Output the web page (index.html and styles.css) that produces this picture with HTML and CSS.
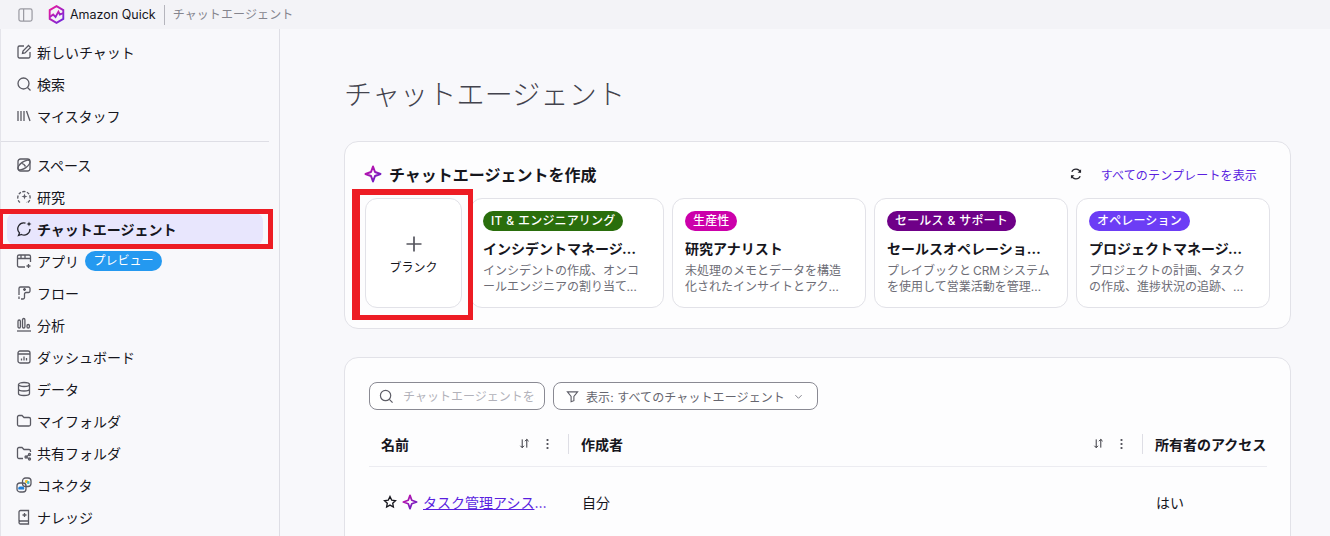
FILE: index.html
```html
<!DOCTYPE html>
<html lang="ja">

<head>
    <meta charset="UTF-8">
    <meta name="viewport" content="width=device-width, initial-scale=1.0">
    <title>チャットエージェント</title>
    <link rel="stylesheet" href="styles.css">
</head>

<body>
    <svg class="defs" width="0" height="0">
        <defs>
            <linearGradient id="spark" x1="0" y1="0" x2="1" y2="1">
                <stop offset="0" stop-color="#d010a8" />
                <stop offset="1" stop-color="#5a20c8" />
            </linearGradient>
            <linearGradient id="logo" x1="0" y1="0" x2="1" y2="1">
                <stop offset="0" stop-color="#f0189a" />
                <stop offset="1" stop-color="#6a28e0" />
            </linearGradient>
        </defs>
    </svg>

    <header class="topbar">
        <svg class="panel-icon" viewBox="0 0 16 16">
            <rect x="1" y="1.5" width="14" height="13" rx="2" />
            <path d="M6 1.5v13" />
        </svg>
        <svg class="logo" viewBox="0 0 18 20">
            <path d="M9 1.2l7.2 4.2v9.2L9 18.8l-7.2-4.2V5.400z" />
            <path d="M2 12.500l3.500-2.500 2.500 2.500 3-5.500 1.500 3 3.500-1.500" />
        </svg>
        <span class="brand">Amazon Quick</span>
        <span class="crumb">チャットエージェント</span>
    </header>

    <div class="layout">
        <nav class="sidebar">
            <a class="nav-item">
                <svg class="icon" viewBox="0 0 16 16">
                    <path d="M8 2H3.500A1.500 1.500 0 0 0 2 3.500v9A1.500 1.500 0 0 0 3.500 14h9a1.500 1.500 0 0 0 1.500-1.500V8" />
                    <path d="M6.500 9.500l.5-2.500 5.500-5.500 2 2L9 9z" />
                </svg>
                新しいチャット
            </a>
            <a class="nav-item">
                <svg class="icon" viewBox="0 0 16 16">
                    <circle cx="7.500" cy="7.500" r="5.500" />
                    <path d="M11.500 11.500l3 3" />
                </svg>
                検索
            </a>
            <a class="nav-item">
                <svg class="icon" viewBox="0 0 16 16">
                    <path d="M2 3v10M5 3v10M8 3v10M10.500 3l3.500 10" />
                </svg>
                マイスタッフ
            </a>
            <hr class="nav-divider">
            <a class="nav-item">
                <svg class="icon" viewBox="0 0 16 16">
                    <rect x="2" y="2" width="12" height="12" rx="2.500" />
                    <ellipse cx="8" cy="8" rx="7" ry="3.200" transform="rotate(-35 8 8)" />
                    <path d="M6 6.500l2 1 1.500 2" />
                </svg>
                スペース
            </a>
            <a class="nav-item">
                <svg class="icon" viewBox="0 0 16 16">
                    <path d="M4 13.500a6.200 6.200 0 1 1 7.500.3l-.8-.8" stroke-dasharray="3 1.400" />
                    <path class="icon-fill" d="M8.500 4.500l.8 2.200 2.200.8-2.200.8-.8 2.200-.8-2.200-2.200-.8 2.200-.8z" />
                </svg>
                研究
            </a>
            <a class="nav-item active">
                <svg class="icon dark" viewBox="0 0 16 16">
                    <path d="M9.500 2.100A6 6 0 0 0 3.500 12L2.500 14.500 5.500 13.500A6 6 0 0 0 14 8" />
                    <path class="icon-fill" d="M13 .5l.7 1.800 1.800.7-1.800.7-.7 1.800-.7-1.800-1.800-.7 1.800-.7z" />
                </svg>
                チャットエージェント
            </a>
            <a class="nav-item">
                <svg class="icon" viewBox="0 0 16 16">
                    <path d="M9 14H3a1.500 1.500 0 0 1-1.500-1.500v-9A1.500 1.500 0 0 1 3 2h10a1.500 1.500 0 0 1 1.500 1.500V9" />
                    <path d="M1.500 5.500h13M5 2v3.500M9 2v3.500M12.500 11v4M10.500 13h4" />
                </svg>
                アプリ
                <span class="preview">プレビュー</span>
            </a>
            <a class="nav-item">
                <svg class="icon" viewBox="0 0 16 16">
                    <path d="M3 10V3.500A1.500 1.500 0 0 1 4.500 2h8A1.500 1.500 0 0 1 14 3.500V6a1.500 1.500 0 0 1-1.500 1.500H10a1.500 1.500 0 0 0-1.500 1.500v3.500A1.500 1.500 0 0 1 7 14H5" />
                    <path d="M8.500 3v3M7 4.500h3M3 11.500v2.500" />
                </svg>
                フロー
            </a>
            <a class="nav-item">
                <svg class="icon" viewBox="0 0 16 16">
                    <rect x="2" y="3" width="2.400" height="8" rx="1.200" />
                    <rect x="6.500" y="1.500" width="2.400" height="9.500" rx="1.200" />
                    <rect x="11" y="7.500" width="2.400" height="3.500" rx="1.200" />
                    <path d="M1 14h14" />
                </svg>
                分析
            </a>
            <a class="nav-item">
                <svg class="icon" viewBox="0 0 16 16">
                    <rect x="2" y="2" width="12" height="12" rx="2" />
                    <path d="M2 5h12M5.500 11.500V9.500M8 11.500V7.500M10.500 11.500V9" />
                </svg>
                ダッシュボード
            </a>
            <a class="nav-item">
                <svg class="icon" viewBox="0 0 16 16">
                    <ellipse cx="8" cy="3.500" rx="5.500" ry="2" />
                    <path d="M2.500 3.500v9c0 1.100 2.500 2 5.500 2s5.500-.9 5.500-2v-9M2.500 8c0 1.100 2.500 2 5.500 2s5.500-.9 5.500-2" />
                </svg>
                データ
            </a>
            <a class="nav-item">
                <svg class="icon" viewBox="0 0 16 16">
                    <path d="M1.500 4a1.500 1.500 0 0 1 1.500-1.500h3l2 2h5a1.500 1.500 0 0 1 1.500 1.500v5.500a1.500 1.500 0 0 1-1.500 1.500H3a1.500 1.500 0 0 1-1.500-1.500z" />
                </svg>
                マイフォルダ
            </a>
            <a class="nav-item">
                <svg class="icon" viewBox="0 0 16 16">
                    <path d="M7 13.500H3A1.500 1.500 0 0 1 1.500 12V4A1.500 1.500 0 0 1 3 2.500h3l2 2h5A1.500 1.500 0 0 1 14.500 6v1" />
                    <circle cx="13.500" cy="9.500" r="1" />
                    <circle cx="13.500" cy="14" r="1" />
                    <circle cx="10" cy="12" r="1" />
                    <path d="M11 11.500l1.600-1.400M11 12.500l1.600 1" />
                </svg>
                共有フォルダ
            </a>
            <a class="nav-item">
                <svg class="icon" viewBox="0 0 16 16">
                    <rect x="1" y="6" width="9" height="9" rx="3" />
                    <rect x="6.500" y="1" width="8.500" height="8.500" rx="3" />
                    <rect class="conn-yellow" x="9" y="3" width="3" height="3" rx="1" />
                    <rect class="conn-teal" x="11" y="4" width="2.500" height="3" rx="1" />
                    <path class="conn-blue" d="M2.500 12.500a2 2 0 0 1 2-3h2a2 2 0 0 1 1.500 3z" />
                </svg>
                コネクタ
            </a>
            <a class="nav-item">
                <svg class="icon" viewBox="0 0 16 16">
                    <path d="M3 12.500V3a1.500 1.500 0 0 1 1.500-1.500h8V15H4.500A1.500 1.500 0 0 1 3 13.500 1.500 1.500 0 0 1 4.500 12h8" />
                    <path d="M8.500 4v4M6.500 6h4" />
                </svg>
                ナレッジ
            </a>
        </nav>

        <main class="content">
            <h1 class="page-title">チャットエージェント</h1>

            <section class="panel create-panel">
                <div class="create-head">
                    <svg class="spark" viewBox="0 0 18 18">
                        <path d="M9 1.500L11 7l5.500 2L11 11l-2 5.500L7 11 1.500 9 7 7z" />
                    </svg>
                    <h2 class="create-title">チャットエージェントを作成</h2>
                    <svg class="refresh" viewBox="0 0 16 16">
                        <path d="M13 6A5.300 5.300 0 0 0 3.200 5.500M3 10a5.300 5.300 0 0 0 9.800.5" />
                        <path class="icon-fill" d="M13.800 2.500V6.500H9.800zM2.200 13.500V9.500h4z" />
                    </svg>
                    <a class="all-link">すべてのテンプレートを表示</a>
                </div>
                <div class="cards">
                    <div class="card blank">
                        <svg class="plus" viewBox="0 0 16 16">
                            <path d="M8 0.500v15M0.500 8h15" />
                        </svg>
                        <span>ブランク</span>
                    </div>
                    <div class="card">
                        <span class="tag green">IT &amp; エンジニアリング</span>
                        <div class="card-title">インシデントマネージャー</div>
                        <p class="card-desc">インシデントの作成、オンコールエンジニアの割り当て、対応状況の追跡を行います</p>
                    </div>
                    <div class="card">
                        <span class="tag pink">生産性</span>
                        <div class="card-title">研究アナリスト</div>
                        <p class="card-desc">未処理のメモとデータを構造化されたインサイトとアクションに変換します</p>
                    </div>
                    <div class="card">
                        <span class="tag purple">セールス &amp; サポート</span>
                        <div class="card-title">セールスオペレーションアシスタント</div>
                        <p class="card-desc">プレイブックと CRM システムを使用して営業活動を管理します。詳細はこちら</p>
                    </div>
                    <div class="card">
                        <span class="tag violet">オペレーション</span>
                        <div class="card-title">プロジェクトマネージャー</div>
                        <p class="card-desc">プロジェクトの計画、タスクの作成、進捗状況の追跡、関係者への報告を行います</p>
                    </div>
                </div>
            </section>

            <section class="panel list-panel">
                <div class="toolbar">
                    <label class="search">
                        <svg class="search-icon" viewBox="0 0 16 16">
                            <circle cx="7" cy="7" r="5.500" />
                            <path d="M11 11l3.500 3.500" />
                        </svg>
                        <input type="text" placeholder="チャットエージェントを検索">
                    </label>
                    <button class="filter">
                        <svg class="filter-icon" viewBox="0 0 14 14">
                            <path d="M1.500 2h11L8.500 7v4.500l-3 1.200V7z" />
                        </svg>
                        表示: すべてのチャットエージェント
                        <svg class="chevron" viewBox="0 0 10 10">
                            <path d="M1.500 3.500L5 7l3.500-3.500" />
                        </svg>
                    </button>
                </div>
                <div class="table">
                    <div class="table-head">
                        <div class="th">
                            <span class="th-label">名前</span>
                            <svg class="sort" viewBox="0 0 12 12">
                                <path d="M3.500 1.500v9M1.500 8.500l2 2 2-2M8.500 10.500v-9M6.500 3.500l2-2 2 2" />
                            </svg>
                            <span class="dots"></span>
                        </div>
                        <div class="th">
                            <span class="th-label">作成者</span>
                            <svg class="sort" viewBox="0 0 12 12">
                                <path d="M3.500 1.500v9M1.500 8.500l2 2 2-2M8.500 10.500v-9M6.500 3.500l2-2 2 2" />
                            </svg>
                            <span class="dots"></span>
                        </div>
                        <div class="th">
                            <span class="th-label">所有者のアクセス</span>
                        </div>
                    </div>
                    <div class="table-row">
                        <div class="td name-cell">
                            <svg class="star" viewBox="0 0 14 14">
                                <path d="M7 1.500l1.700 3.600 3.800.5-2.800 2.600.7 3.800L7 10.100 3.600 12l.7-3.800L1.500 5.600l3.800-.5z" />
                            </svg>
                            <svg class="spark small" viewBox="0 0 18 18">
                                <path d="M9 1.500L11 7l5.500 2L11 11l-2 5.500L7 11 1.500 9 7 7z" />
                            </svg>
                            <a class="agent-link">タスク管理アシスタント</a>
                        </div>
                        <div class="td">自分</div>
                        <div class="td">はい</div>
                    </div>
                </div>
            </section>
        </main>
    </div>

    <!-- red annotation boxes drawn over the screenshot -->
    <div class="mark mark-nav"></div>
    <div class="mark mark-blank"></div>
</body>

</html>
```

FILE: styles.css
```css
* {
    box-sizing: border-box;
}

html,
body {
    height: 536px;
    margin: 0;
    overflow: hidden;
}

body {
    background: #f8f8fb;
    color: #16161d;
    font-family: Inter, 'Noto Sans CJK JP', sans-serif;
    font-size: 14px;
    position: relative;
}

.defs {
    position: absolute;
}

/* top bar */
.topbar {
    align-items: center;
    background: #f3f3f7;
    display: flex;
    height: 29px;
    padding-left: 18px;
}

.panel-icon {
    fill: none;
    height: 16px;
    stroke: #9a9aa2;
    stroke-width: 1.3;
    width: 15px;
}

.logo {
    fill: none;
    height: 19px;
    margin-left: 15px;
    stroke: url(#logo);
    stroke-width: 2;
    width: 17px;
}

.brand {
    font-size: 12.5px;
    margin-left: 5px;
}

.crumb {
    border-left: 1px solid #b5b5bd;
    color: #85858e;
    font-size: 12px;
    letter-spacing: .1px;
    line-height: 20px;
    margin-left: 8px;
    padding-left: 8px;
}

.layout {
    display: flex;
    height: 507px;
}

/* sidebar */
.sidebar {
    border-left: 1px solid #e4e4ea;
    border-right: 1px solid #dedee5;
    flex: 0 0 280px;
    overflow: hidden;
    padding: 7px 0 0;
}

.nav-item {
    align-items: center;
    border-radius: 8px;
    display: flex;
    height: 32px;
    margin: 0 16px 0 6px;
    padding-left: 9px;
    white-space: nowrap;
}

.nav-item.active {
    background: #e8e6fd;
    font-weight: 700;
}

.icon {
    color: #5f5f68;
    fill: none;
    flex: 0 0 16px;
    height: 16px;
    margin-right: 5px;
    stroke: #5a5a63;
    stroke-width: 1.300;
    width: 16px;
}

.icon.dark {
    color: #26262e;
    stroke: #26262e;
}

.icon-fill {
    fill: currentColor;
    stroke: none;
}

.conn-yellow {
    fill: #f2c230;
    stroke: none;
}

.conn-teal {
    fill: #45c0c8;
    stroke: none;
}

.conn-blue {
    fill: #1f7fd8;
    stroke: none;
}

.nav-divider {
    border: 0;
    border-top: 1px solid #dedee5;
    margin: 9px 10px 7px 0;
}

.preview {
    background: #2499f0;
    border-radius: 10px;
    color: #fff;
    font-size: 12px;
    line-height: 20px;
    margin-left: 6px;
    padding: 0 8.500px;
}

/* main area */
.content {
    flex: 1;
    overflow: hidden;
    padding: 0 39px 0 64px;
}

.page-title {
    color: #43434d;
    font-size: 28px;
    font-weight: 300;
    letter-spacing: .2px;
    line-height: 40px;
    margin: 46px 0 26px;
}

.panel {
    background: #fdfdfe;
    border: 1px solid #e2e2e8;
    border-radius: 14px;
}

.create-panel {
    height: 188px;
    padding: 20px 20px 0;
}

.create-head {
    align-items: center;
    display: flex;
    height: 24px;
    margin: 0 0 12px -1px;
}

.spark {
    fill: none;
    height: 18px;
    stroke: url(#spark);
    stroke-width: 2;
    stroke-linejoin: round;
    width: 18px;
}

.spark.small {
    flex: 0 0 16px;
    height: 16px;
    margin: 0 5px 0 5px;
    width: 16px;
}

.create-title {
    flex: 1;
    font-size: 16px;
    font-weight: 700;
    margin: 0 0 0 7px;
}

.refresh {
    color: #26262e;
    fill: none;
    height: 14px;
    margin-right: 18px;
    stroke: #26262e;
    stroke-width: 1.500;
    width: 14px;
}

.all-link {
    color: #5a1fe0;
    font-size: 12px;
    letter-spacing: .15px;
    margin-right: 13px;
}

.cards {
    display: grid;
    gap: 8px;
    grid-template-columns: 97px repeat(4, 1fr);
    height: 110px;
}

.card {
    background: #fff;
    border: 1px solid #e2e2e8;
    border-radius: 12px;
    min-width: 0;
    padding: 12px 16px 0 12px;
}

.blank {
    align-items: center;
    display: flex;
    flex-direction: column;
    font-size: 12px;
    padding: 37px 0 0;
}

.plus {
    fill: none;
    height: 16px;
    margin-bottom: 6px;
    stroke: #55555e;
    stroke-width: 1.700;
    width: 16px;
}

.tag {
    border-radius: 10px;
    color: #fff;
    display: inline-block;
    font-size: 12px;
    font-weight: 500;
    letter-spacing: .15px;
    line-height: 20px;
    padding: 0 8px;
    white-space: nowrap;
    word-spacing: .5px;
}

.green {
    background: #2a6e0c;
}

.pink {
    background: #cc00aa;
}

.purple {
    background: #6f0088;
}

.violet {
    background: #6c3df5;
}

.card-title {
    font-weight: 700;
    line-height: 20px;
    margin-top: 8px;
    overflow: hidden;
    text-overflow: ellipsis;
    white-space: nowrap;
}

.card-desc {
    -webkit-box-orient: vertical;
    -webkit-line-clamp: 2;
    color: #6d6d76;
    display: -webkit-box;
    font-size: 12px;
    line-height: 16px;
    line-break: loose;
    margin: 4px 0 0;
    overflow: hidden;
    word-spacing: -1.500px;
}

/* agent list */
.list-panel {
    height: 200px;
    margin-top: 28px;
    padding: 24px 23px 0 24px;
}

.toolbar {
    display: flex;
    gap: 8px;
}

.search,
.filter {
    align-items: center;
    background: #fff;
    border: 1px solid #8a8a93;
    border-radius: 8px;
    display: flex;
    height: 28px;
}

.search {
    overflow: hidden;
    padding: 0 9px;
    width: 176px;
}

.search-icon {
    fill: none;
    flex: 0 0 15px;
    height: 15px;
    stroke: #5f5f68;
    stroke-width: 1.300;
    width: 15px;
}

.search input {
    border: 0;
    background: transparent;
    flex: 1;
    font-family: inherit;
    font-size: 12px;
    margin-left: 9px;
    min-width: 0;
    outline: none;
    padding: 0;
}

.search input::placeholder {
    color: #b2b2ba;
}

.filter {
    color: #66666f;
    font-family: inherit;
    font-size: 12px;
    letter-spacing: .1px;
    padding: 0 14px 0 12px;
    width: 265px;
}

.filter-icon {
    fill: none;
    height: 13px;
    margin-right: 7px;
    stroke: #5f5f68;
    stroke-width: 1.200;
    width: 13px;
}

.chevron {
    fill: none;
    height: 9px;
    margin-left: auto;
    stroke: #85858e;
    stroke-width: 1.100;
    width: 9px;
}

.table {
    margin-top: 14px;
    overflow: hidden;
}

.table-head,
.table-row {
    display: grid;
    grid-template-columns: 200px 574px 1fr;
}

.table-head {
    border-bottom: 1px solid #ececf1;
    height: 43px;
    padding-top: 10px;
}

.th {
    align-items: center;
    border-right: 1px solid #dedee5;
    display: flex;
    height: 20px;
    padding: 0 12px;
}

.th:last-child {
    border-right: 0;
    white-space: nowrap;
}

.th-label {
    flex: 1;
    font-weight: 700;
}

.sort {
    fill: none;
    height: 11px;
    margin: 0 16px 2px 0;
    stroke: #26262e;
    stroke-width: 1;
    width: 11px;
}

.dots {
    background: radial-gradient(circle, #55555e 1px, transparent 1.200px) 0 0 / 3px 4px repeat-y;
    height: 12px;
    margin-right: 7px;
    width: 3px;
}

.table-row {
    padding-top: 25px;
}

.td {
    align-items: center;
    display: flex;
    height: 20px;
    padding-left: 13px;
}

.name-cell {
    min-width: 0;
    padding: 0 17px 0 14px;
}

.star {
    fill: none;
    flex: 0 0 14px;
    height: 14px;
    stroke: #16161d;
    stroke-width: 1.300;
    width: 14px;
}

.agent-link {
    color: #5a1fe0;
    overflow: hidden;
    text-decoration: underline;
    text-overflow: ellipsis;
    white-space: nowrap;
}

/* annotation */
.mark {
    border: 5px solid #ed1c24;
    pointer-events: none;
    position: absolute;
}

.mark-nav {
    height: 40px;
    left: -2px;
    top: 209px;
    width: 275px;
}

.mark-blank {
    border-width: 6px 5px 5px 8px;
    height: 131px;
    left: 352px;
    top: 189px;
    width: 121px;
}
```
